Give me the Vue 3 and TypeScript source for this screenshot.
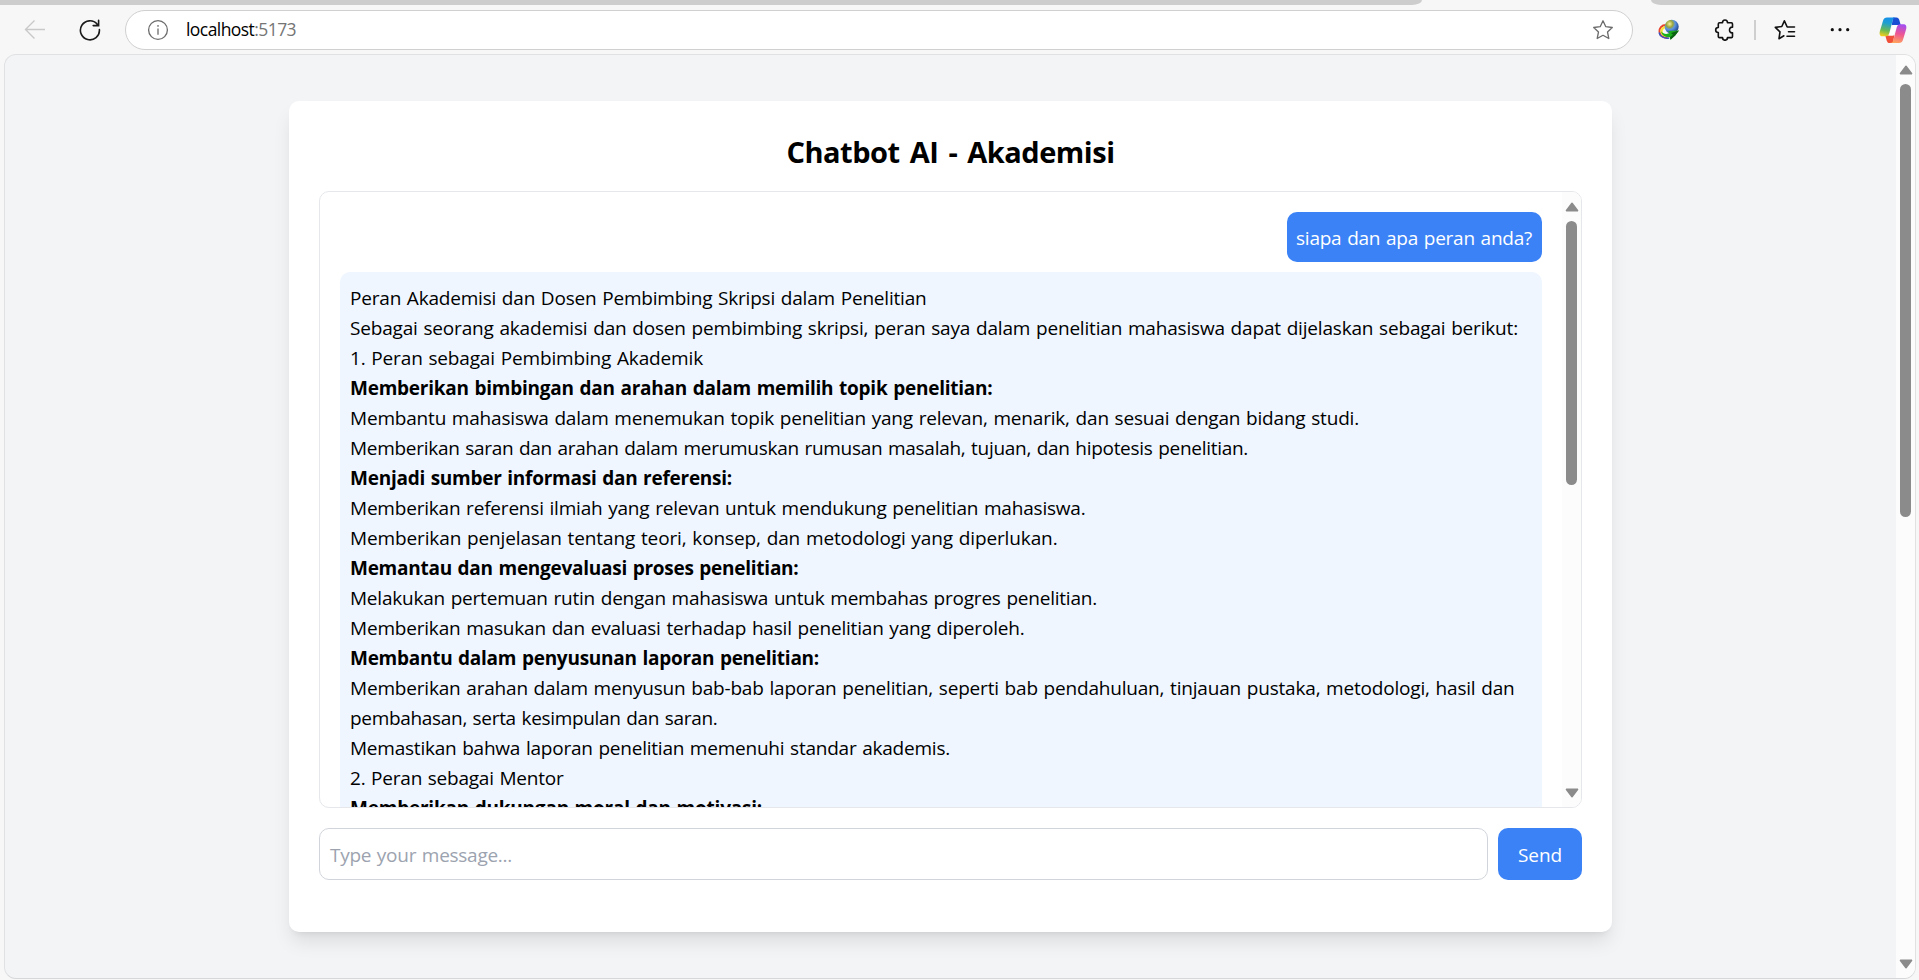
<script setup lang="ts">
import { type Directive } from 'vue'

interface Line {
  text: string
  width: number
  bold?: boolean
}

const lines: Line[] = [
  { text: 'Peran Akademisi dan Dosen Pembimbing Skripsi dalam Penelitian', width: 576.5 },
  { text: 'Sebagai seorang akademisi dan dosen pembimbing skripsi, peran saya dalam penelitian mahasiswa dapat dijelaskan sebagai berikut:', width: 1168 },
  { text: '1. Peran sebagai Pembimbing Akademik', width: 353 },
  { text: 'Memberikan bimbingan dan arahan dalam memilih topik penelitian:', width: 642.5, bold: true },
  { text: 'Membantu mahasiswa dalam menemukan topik penelitian yang relevan, menarik, dan sesuai dengan bidang studi.', width: 1009 },
  { text: 'Memberikan saran dan arahan dalam merumuskan rumusan masalah, tujuan, dan hipotesis penelitian.', width: 898 },
  { text: 'Menjadi sumber informasi dan referensi:', width: 382, bold: true },
  { text: 'Memberikan referensi ilmiah yang relevan untuk mendukung penelitian mahasiswa.', width: 735.5 },
  { text: 'Memberikan penjelasan tentang teori, konsep, dan metodologi yang diperlukan.', width: 707.5 },
  { text: 'Memantau dan mengevaluasi proses penelitian:', width: 448.5, bold: true },
  { text: 'Melakukan pertemuan rutin dengan mahasiswa untuk membahas progres penelitian.', width: 747 },
  { text: 'Memberikan masukan dan evaluasi terhadap hasil penelitian yang diperoleh.', width: 674.5 },
  { text: 'Membantu dalam penyusunan laporan penelitian:', width: 469, bold: true },
  { text: 'Memberikan arahan dalam menyusun bab-bab laporan penelitian, seperti bab pendahuluan, tinjauan pustaka, metodologi, hasil dan', width: 1164.5 },
  { text: 'pembahasan, serta kesimpulan dan saran.', width: 367.5 },
  { text: 'Memastikan bahwa laporan penelitian memenuhi standar akademis.', width: 600 },
  { text: '2. Peran sebagai Mentor', width: 213.5 },
  { text: 'Memberikan dukungan moral dan motivasi:', width: 412, bold: true },
]

// Spreads the tracking of a text run so that it fills the given width.
const vFit: Directive<HTMLElement, number> = {
  mounted(el, { value }) {
    const count = (el.textContent ?? '').length
    const natural = el.getBoundingClientRect().width
    el.style.letterSpacing = `${(value - natural) / count}px`
  },
}
</script>

<template>
  <div class="browser">
    <div class="tabs">
      <div class="tab-left"></div>
      <div class="tab-right"></div>
    </div>
    <header class="toolbar">
      <svg class="back" width="22" height="22" viewBox="0 0 22 22" fill="none" stroke="#c9c9c9" stroke-width="1.4">
        <path d="M21 10.500H1.500M10.500 1.500L1.500 10.500l9 9" />
      </svg>
      <svg class="reload" width="22" height="22" viewBox="0 0 22 22" fill="none" stroke="#1b1b1b" stroke-width="1.6" stroke-linecap="round">
        <path d="M20.4 10.6A9.5 9.5 0 1 1 18.2 5.2M19.6 1.4V6.6H14.2" />
      </svg>
      <div class="address">
        <svg class="info" width="22" height="22" viewBox="0 0 22 22" fill="none" stroke="#6b6b6b" stroke-width="1.3">
          <circle cx="11" cy="11" r="9.4" />
          <path d="M11 9.6v6.2" />
          <circle cx="11" cy="6.9" r=".5" fill="#6b6b6b" stroke-width=".8" />
        </svg>
        <span v-fit="110" class="url">localhost<span class="port">:5173</span></span>
        <svg class="star" width="22" height="22" viewBox="0 0 22 22" fill="none" stroke="#6b6b6b" stroke-width="1.3" stroke-linejoin="round">
          <path d="M11 1.8l2.8 5.9 6.5.8-4.8 4.500 1.300 6.500-5.800-3.200-5.800 3.200 1.300-6.500L1.700 8.500l6.500-.8z" />
        </svg>
      </div>
      <svg class="idm" width="22" height="22" viewBox="0 0 22 22">
        <defs>
          <radialGradient id="globe" cx=".35" cy=".3" r=".8">
            <stop offset="0" stop-color="#f4f0a0" />
            <stop offset=".3" stop-color="#9aa53a" />
            <stop offset=".5" stop-color="#5b93e4" />
            <stop offset="1" stop-color="#12306e" />
          </radialGradient>
        </defs>
        <path d="M8 6C3.500 6 1.200 9.500 1.500 12.500c.3 4 4 6.500 8 6.300" fill="none" stroke="#e8452c" stroke-width="2" />
        <path d="M8.500 8C5 8 3.300 10.500 3.500 12.500c.3 3 3 4.500 6 4.300" fill="none" stroke="#f7e13a" stroke-width="2.400" />
        <path d="M1 13.500c1 4.500 5.500 6.300 10.200 5.500" fill="none" stroke="#3a52c4" stroke-width="1.400" />
        <circle cx="13.700" cy="7.700" r="7" fill="url(#globe)" />
        <path d="M3 12.300c2.500 3 6 3.300 9 1.500l-2-1.800 11-.5-3.800 5L12.500 20.700l-.5-2.500C8 18.700 4 16.800 3 12.300z" fill="#1cae1c" />
        <path d="M13 14l8-2.500-3.800 5-4.700 4.200-.5-2.500 3-2.500z" fill="#0b5f12" />
      </svg>
      <svg class="puzzle" width="22" height="22" viewBox="0 0 22 22" fill="none" stroke="#111" stroke-width="1.6" stroke-linejoin="round">
        <path d="M5.500 3.700h3c0-3.700 5-3.700 5 0h3.800c.7 0 1.200.5 1.200 1.200v3.300c-4-.7-4 6.300 0 5.600v3.600c0 .7-.5 1.200-1.200 1.200h-3.800c0 3.500-5 3.500-5 0h-3c-.7 0-1.200-.5-1.200-1.200v-3.900c-3.500 0-3.500-5 0-5V4.900c0-.7.5-1.200 1.200-1.200z" />
      </svg>
      <div class="divider"></div>
      <svg class="favorites" width="22" height="22" viewBox="0 0 22 22" fill="none" stroke="#111" stroke-width="1.600" stroke-linejoin="round" stroke-linecap="round">
        <path d="M20.500 8h-7.300L10.400 1.800 7.800 7.500l-6.500.9 4.700 4.500-1 6.800 4.900-2.900M14.500 12.700h6M13 17.300h7.500" />
      </svg>
      <svg class="dots" width="22" height="22" viewBox="0 0 22 22" fill="#111">
        <circle cx="3.300" cy="10.700" r="1.600" /><circle cx="11" cy="10.700" r="1.600" /><circle cx="18.700" cy="10.700" r="1.600" />
      </svg>
      <svg class="copilot" width="28" height="28" viewBox="0 0 28 28">
        <defs>
          <linearGradient id="cool" x1=".5" y1="0" x2=".3" y2="1">
            <stop offset="0" stop-color="#1590ea" />
            <stop offset=".3" stop-color="#1f9fd0" />
            <stop offset=".7" stop-color="#6dba50" />
            <stop offset="1" stop-color="#f3ce1c" />
          </linearGradient>
          <linearGradient id="warm" x1=".6" y1="0" x2=".4" y2="1">
            <stop offset="0" stop-color="#a44df0" />
            <stop offset=".5" stop-color="#ee5693" />
            <stop offset="1" stop-color="#ffa45c" />
          </linearGradient>
        </defs>
        <path d="M14 1.500h3.500c1.500 0 2.300 1 2.800 2.600L21.700 9h-9z" fill="#1b4fd3" />
        <path d="M14 27.100h-3.500c-1.500 0-2.300-1-2.800-2.600L6.300 19.600h9z" fill="#f0503a" />
        <path d="M14.200 9h4.300l-4.700 10.600h-4.300z" fill="#fff" />
        <path d="M8 1.500h9c-2 0-2.800 1-3.300 2.800L10.300 17c-.6 2-1.500 3.300-3.300 3.300H3.500C.8 20.300.2 18 .8 15.500L4 4.800C4.700 2.500 6 1.500 8 1.500z" fill="url(#cool)" />
        <path d="M20 27.100h-9c2 0 2.800-1 3.300-2.800L17.700 11.600c.6-2 1.500-3.300 3.300-3.300h3.500c2.700 0 3.300 2.300 2.700 4.800L24 23.800c-.7 2.300-2 3.300-4 3.300z" fill="url(#warm)" />
      </svg>
    </header>

    <main class="viewport">
      <div class="page">
        <section class="card">
          <h1 class="title"><span v-fit="328">Chatbot AI - Akademisi</span></h1>
          <div class="chat">
            <div class="messages">
              <div class="question"><span v-fit="236">siapa dan apa peran anda?</span></div>
              <div class="answer">
                <div v-for="line in lines" :key="line.text" class="line">
                  <span v-fit="line.width" :class="{ bold: line.bold }">{{ line.text }}</span>
                </div>
              </div>
            </div>
            <div class="scrollbar chat-scroll">
              <svg width="14" height="10" viewBox="0 0 14 10"><path d="M7 1.500L12.300 8.600H1.700z" fill="#8b8b8b" stroke="#8b8b8b" stroke-width="2" stroke-linejoin="round" /></svg>
              <div class="thumb"></div>
              <svg class="down" width="14" height="10" viewBox="0 0 14 10"><path d="M7 8.500L12.300 1.400H1.700z" fill="#8b8b8b" stroke="#8b8b8b" stroke-width="2" stroke-linejoin="round" /></svg>
            </div>
          </div>
          <div class="composer">
            <div class="input"><span v-fit="182">Type your message...</span></div>
            <button class="send" type="button"><span v-fit="44">Send</span></button>
          </div>
        </section>
      </div>
      <div class="scrollbar page-scroll">
        <svg width="14" height="10" viewBox="0 0 14 10"><path d="M7 1.500L12.300 8.600H1.700z" fill="#8b8b8b" stroke="#8b8b8b" stroke-width="2" stroke-linejoin="round" /></svg>
        <div class="thumb"></div>
        <svg class="down" width="14" height="10" viewBox="0 0 14 10"><path d="M7 8.500L12.300 1.400H1.700z" fill="#8b8b8b" stroke="#8b8b8b" stroke-width="2" stroke-linejoin="round" /></svg>
      </div>
    </main>
  </div>
</template>

<style>
body {
  margin: 0;
  overflow: hidden;
}
</style>

<style scoped>
* {
  box-sizing: border-box;
}
svg {
  display: block;
  flex: none;
}
.browser {
  width: 1919px;
  height: 980px;
  display: flex;
  flex-direction: column;
  background: #f7f7f7;
  overflow: hidden;
  font-family: 'Segoe UI', 'Open Sans', 'Noto Sans', sans-serif;
  font-size: 19px;
  word-spacing: 1px;
  color: #000;
}
.tabs {
  display: flex;
  justify-content: space-between;
  height: 5px;
  flex: none;
}
.tab-left {
  width: 1422px;
  background: #cdcdcd;
  border-bottom-right-radius: 10px 5px;
}
.tab-right {
  width: 268px;
  background: #cdcdcd;
  border-bottom-left-radius: 10px 5px;
}
.toolbar {
  display: flex;
  align-items: center;
  height: 49px;
  flex: none;
  padding: 0 12px 0 24px;
}
.reload {
  margin-left: 33px;
}
.address {
  display: flex;
  align-items: center;
  width: 1508px;
  height: 40px;
  margin-left: 24px;
  padding: 0 18px 0 21px;
  border: 1px solid #d0d0d0;
  border-radius: 20px;
  background: #fff;
}
.url {
  margin-left: 17px;
  padding-bottom: 2px;
  font-size: 17.5px;
  white-space: nowrap;
}
.port {
  color: #757575;
}
.star {
  margin-left: auto;
}
.idm {
  margin-left: 25px;
}
.puzzle {
  margin-left: 34px;
}
.divider {
  width: 2px;
  height: 20px;
  margin-left: 18px;
  background: #cfcfcf;
}
.favorites {
  margin-left: 18px;
}
.dots {
  margin-left: 33px;
}
.copilot {
  margin-left: 28px;
}
.viewport {
  display: flex;
  width: 1912px;
  height: 925px;
  margin-left: 4px;
  flex: none;
  overflow: hidden;
  border: 1px solid #dfe1e3;
  border-bottom-color: #d6d7d9;
  border-radius: 12px;
  background: #f3f4f6;
}
.page {
  flex: 1;
  padding: 46px 0 0 284px;
}
.card {
  width: 1323px;
  height: 831px;
  padding: 30px;
  border-radius: 10px;
  background: #fff;
  box-shadow: 0 12.5px 18.75px -3.75px rgba(0, 0, 0, 0.1), 0 5px 7.5px -5px rgba(0, 0, 0, 0.1);
}
.title {
  height: 40px;
  margin: 0 0 20px;
  padding-top: 1px;
  font-size: 29px;
  line-height: 40px;
  font-weight: 700;
  text-align: center;
  word-spacing: 3px;
}
.chat {
  display: flex;
  height: 617px;
  border: 1px solid #e5e7eb;
  border-radius: 10px;
  overflow: hidden;
}
.messages {
  flex: 1;
  display: flex;
  flex-direction: column;
  gap: 10px;
  padding: 20px 20px 0;
}
.question,
.answer {
  padding: 11px 10px 9px;
  border-radius: 10px;
  line-height: 30px;
  white-space: nowrap;
  flex: none;
}
.question {
  align-self: flex-end;
  width: 255px;
  padding-left: 9px;
  background: #3b82f6;
  color: #fff;
}
.answer {
  background: #eff6ff;
}
.line {
  height: 30px;
}
.bold {
  font-weight: 700;
}
.scrollbar {
  display: flex;
  flex-direction: column;
  align-items: center;
  width: 19px;
  flex: none;
  padding: 10px 0 9px;
  background: #fcfcfc;
}
.thumb {
  width: 11px;
  margin-top: 9px;
  border-radius: 6px;
  background: #8b8b8b;
}
.chat-scroll .thumb {
  height: 264px;
}
.page-scroll .thumb {
  height: 433px;
}
.down {
  margin-top: auto;
}
.composer {
  display: flex;
  gap: 10px;
  height: 52px;
  margin-top: 20px;
}
.input {
  flex: 1;
  padding: 0 10px;
  border: 1px solid #d1d5db;
  border-radius: 10px;
  line-height: 52px;
  color: #9ca3af;
}
.send {
  width: 84px;
  padding: 1px 0 0;
  border: 0;
  border-radius: 10px;
  background: #3b82f6;
  color: #fff;
  font: inherit;
}
</style>
